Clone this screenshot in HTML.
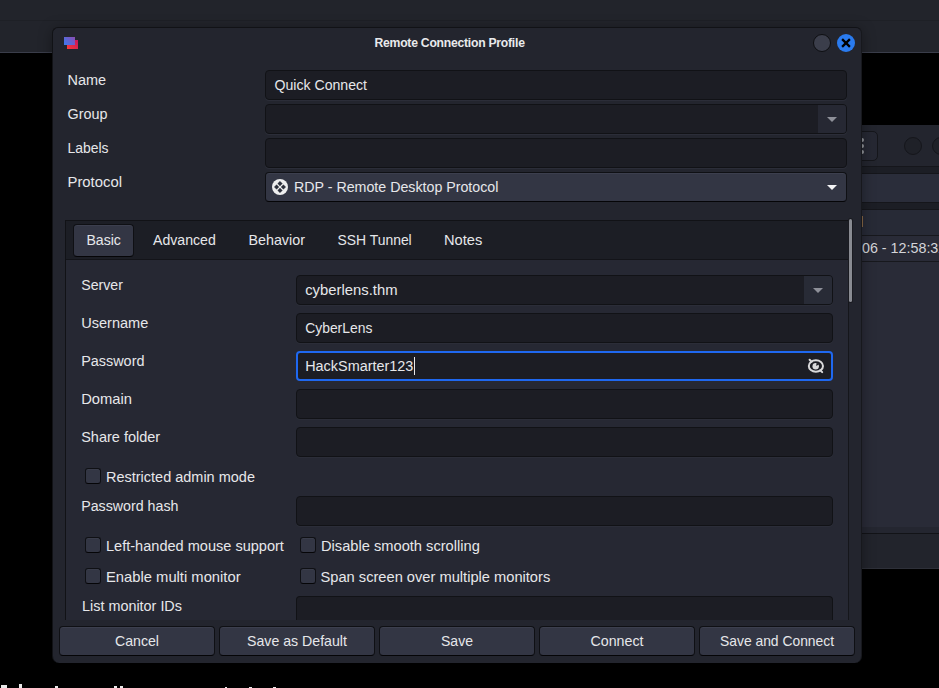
<!DOCTYPE html>
<html><head><meta charset="utf-8">
<style>
*{margin:0;padding:0;box-sizing:border-box}
html,body{width:939px;height:688px;overflow:hidden;background:#000;font-family:"Liberation Sans",sans-serif;font-size:14px;color:#e6e7ea}
.a{position:absolute}
.t{position:absolute;line-height:16px;white-space:nowrap}
.ent{position:absolute;background:#1c1d24;border:1px solid #111216;border-radius:4px;box-shadow:0 1px 0 #2b2d38}
.btn{position:absolute;background:#333644;border:1px solid #0f1014;border-bottom-color:#050507;border-radius:4px;box-shadow:inset 0 1px 0 #3c3f4e}
.cb{position:absolute;width:16px;height:16px;background:#333644;border:1px solid #0f1014;border-bottom-color:#050507;border-radius:3px;box-shadow:inset 0 1px 0 #3a3d4b}
.arr{position:absolute;width:0;height:0;border-left:5px solid transparent;border-right:5px solid transparent;border-top:5px solid #8e9099}
</style></head><body>
<div class="a" style="left:0;top:0;width:939px;height:52px;background:#22242b"></div>
<div class="a" style="left:0;top:20px;width:939px;height:1px;background:#1e2026"></div>
<div class="a" style="left:0;top:52px;width:939px;height:1px;background:#3a3d4a"></div>
<div class="a" style="left:862px;top:125px;width:77px;height:41px;background:#23252e;"></div>
<div class="a" style="left:848px;top:131px;width:30px;height:30px;background:#262833;border:1px solid #15161b;border-radius:5px"></div>
<div class="a" style="left:860px;top:138px;width:4px;height:4px;background:#94969c;border-radius:2px"></div>
<div class="a" style="left:860px;top:144px;width:4px;height:4px;background:#94969c;border-radius:2px"></div>
<div class="a" style="left:860px;top:150px;width:4px;height:4px;background:#94969c;border-radius:2px"></div>
<div class="a" style="left:904px;top:137px;width:18px;height:18px;background:#1f2128;border:1px solid #15161b;border-radius:50%"></div>
<div class="a" style="left:932px;top:137px;width:18px;height:18px;background:#1f2128;border:1px solid #15161b;border-radius:50%"></div>
<div class="a" style="left:862px;top:166px;width:77px;height:8px;background:#1c1e25;border-top:1px solid #15161b;border-bottom:1px solid #15161b"></div>
<div class="a" style="left:862px;top:174px;width:77px;height:28px;background:#2a2d3a;"></div>
<div class="a" style="left:862px;top:202px;width:77px;height:8px;background:#1c1e25;border-top:1px solid #15161b;border-bottom:1px solid #15161b"></div>
<div class="a" style="left:862px;top:210px;width:77px;height:25px;background:#272a36;"></div>
<div class="a" style="left:862px;top:216px;width:1px;height:11px;background:#8a6a48;"></div>
<div class="a" style="left:862px;top:235px;width:77px;height:1px;background:#17181d;"></div>
<div class="a" style="left:862px;top:236px;width:77px;height:291px;background:#292b37;"></div>
<div class="t" style="left:862px;top:240.05px;font-size:14.3px;color:#d4d5d9">06 - 12:58:32</div>
<div class="a" style="left:862px;top:261px;width:77px;height:1px;background:#17181d;"></div>
<div class="a" style="left:862px;top:527px;width:77px;height:6px;background:#242630;"></div>
<div class="a" style="left:862px;top:533px;width:77px;height:1px;background:#121317;"></div>
<div class="a" style="left:862px;top:534px;width:77px;height:34px;background:#22242c;"></div>
<div class="a" style="left:862px;top:568px;width:77px;height:1px;background:#2e3039;"></div>
<div class="a" style="left:1px;top:685px;width:6px;height:3px;background:#e8e8e8;"></div>
<div class="a" style="left:19px;top:684px;width:2.5px;height:4px;background:#e8e8e8;"></div>
<div class="a" style="left:55px;top:686px;width:2.5px;height:2px;background:#e8e8e8;"></div>
<div class="a" style="left:114px;top:686px;width:3px;height:2px;background:#e8e8e8;"></div>
<div class="a" style="left:120px;top:686px;width:3px;height:2px;background:#e8e8e8;"></div>
<div class="a" style="left:224.5px;top:687px;width:2.5px;height:1px;background:#e8e8e8;"></div>
<div class="a" style="left:249px;top:687px;width:2.5px;height:1px;background:#e8e8e8;"></div>
<div class="a" style="left:273px;top:687px;width:2.5px;height:1px;background:#e8e8e8;"></div>
<div class="a" style="left:52px;top:27px;width:810px;height:636px;background:#23252e;border:1px solid #111216;border-right-color:#17181d;border-bottom:none;border-radius:6px 6px 7px 7px;box-shadow:0 2px 14px rgba(0,0,0,0.35)"></div>
<div class="a" style="left:67px;top:40px;width:11px;height:9px;background:linear-gradient(45deg,#f83a3a,#c8145a);"></div>
<div class="a" style="left:64px;top:37px;width:11px;height:8px;background:linear-gradient(45deg,#3a7af2,#8c4cb0);"></div>
<div class="t" style="left:374.5px;top:34.77px;font-size:12.2px;color:#e9eaec;font-weight:bold;letter-spacing:-0.25px">Remote Connection Profile</div>
<div class="a" style="left:813px;top:34px;width:18px;height:18px;background:#3b3e4b;border:1px solid #0e0f12;border-radius:50%"></div>
<div class="a" style="left:837px;top:34px;width:18px;height:18px;background:#2a7bef;border-radius:50%"></div>
<svg class="a" style="left:837px;top:34px" width="18" height="18" viewBox="0 0 18 18"><path d="M5.1 5.1 L12.9 12.9 M12.9 5.1 L5.1 12.9" stroke="#000" stroke-width="2.3" stroke-linecap="butt"/></svg>
<div class="t" style="left:67.5px;top:71.99px;font-size:14.47px">Name</div>
<div class="t" style="left:67.5px;top:106.01px;font-size:14.39px">Group</div>
<div class="t" style="left:67.5px;top:140.17px;font-size:13.95px">Labels</div>
<div class="t" style="left:67.5px;top:173.85px;font-size:14.86px">Protocol</div>
<div class="ent" style="left:265px;top:70px;width:582px;height:30px"></div>
<div class="t" style="left:274.5px;top:77.11px;font-size:14.12px">Quick Connect</div>
<div class="ent" style="left:265px;top:104px;width:582px;height:30px"></div>
<div class="a" style="left:818px;top:105px;width:28px;height:28px;background:#262833;border-radius:0 3px 3px 0"></div>
<div class="arr" style="left:827px;top:117px"></div>
<div class="ent" style="left:265px;top:138px;width:582px;height:30px"></div>
<div class="btn" style="left:265px;top:172px;width:582px;height:30px"></div>
<svg class="a" style="left:272px;top:179px" width="16" height="16" viewBox="0 0 16 16"><circle cx="8" cy="8" r="8" fill="#eeeeee"/><path d="M8 2.3 L10.3 4.6 L8 6.9 L5.7 4.6Z M8 9.1 L10.3 11.4 L8 13.7 L5.7 11.4Z M4.6 5.7 L6.9 8 L4.6 10.3 L2.3 8Z M11.4 5.7 L13.7 8 L11.4 10.3 L9.1 8Z" fill="#2c2f3b" stroke="#2c2f3b" stroke-width="0.4" stroke-linejoin="round"/></svg>
<div class="t" style="left:294px;top:179.07px;font-size:14.23px">RDP - Remote Desktop Protocol</div>
<div class="arr" style="left:827px;top:185px;border-top-color:#f4f4f6"></div>
<div class="a" style="left:65px;top:220px;width:784px;height:400px;background:#262833;border-left:1px solid #111216;border-top:1px solid #111216;border-right:1px solid #15161b"></div>
<div class="a" style="left:66px;top:221px;width:782px;height:39px;background:#1c1e25;border-bottom:1px solid #131419"></div>
<div class="btn" style="left:73px;top:224px;width:61px;height:33px"></div>
<div class="t" style="left:86.4px;top:232.11px;font-size:14.11px">Basic</div>
<div class="t" style="left:153px;top:232.11px;font-size:14.12px">Advanced</div>
<div class="t" style="left:248.4px;top:232.03px;font-size:14.34px">Behavior</div>
<div class="t" style="left:337.5px;top:232.18px;font-size:13.92px">SSH Tunnel</div>
<div class="t" style="left:444px;top:231.92px;font-size:14.66px">Notes</div>
<div class="a" style="left:849px;top:219px;width:3px;height:83px;background:#898b92;border-radius:1.5px;box-shadow:0 0 0 1px #1a1b21"></div>
<div class="t" style="left:81.2px;top:277.09px;font-size:14.16px">Server</div>
<div class="ent" style="left:296px;top:275px;width:537px;height:30px"></div>
<div class="a" style="left:804px;top:276px;width:28px;height:28px;background:#282b36;border-radius:0 3px 3px 0"></div>
<div class="arr" style="left:813px;top:288px"></div>
<div class="t" style="left:305.2px;top:281.86px;font-size:14.83px">cyberlens.thm</div>
<div class="t" style="left:81.2px;top:314.96px;font-size:14.55px">Username</div>
<div class="ent" style="left:296px;top:313px;width:537px;height:30px"></div>
<div class="t" style="left:305.2px;top:320.18px;font-size:13.9px">CyberLens</div>
<div class="t" style="left:81.2px;top:353.00px;font-size:14.42px">Password</div>
<div class="ent" style="left:296px;top:351px;width:537px;height:30px;border:2px solid #1f68f0;box-shadow:none"></div>
<div class="t" style="left:305.2px;top:358.00px;font-size:14.43px">HackSmarter123</div>
<div class="a" style="left:414px;top:357px;width:1px;height:18px;background:#e8e8ea;"></div>
<svg class="a" style="left:804px;top:355px" width="24" height="22" viewBox="0 0 24 22"><ellipse cx="11.9" cy="11" rx="7.1" ry="5.7" fill="none" stroke="#d9d9db" stroke-width="2"/><circle cx="11.7" cy="11.3" r="3.2" fill="#d9d9db"/><path d="M12.2 11 L12.6 7.6 L15.2 9.2Z" fill="#1c1d24"/><path d="M5.6 4.8 L7.6 6.8 M16.3 15.2 L18.2 17.1" stroke="#d9d9db" stroke-width="2" stroke-linecap="round"/></svg>
<div class="t" style="left:81.2px;top:390.89px;font-size:14.74px">Domain</div>
<div class="ent" style="left:296px;top:389px;width:537px;height:30px"></div>
<div class="t" style="left:81.2px;top:428.98px;font-size:14.5px">Share folder</div>
<div class="ent" style="left:296px;top:427px;width:537px;height:30px"></div>
<div class="cb" style="left:85px;top:468px"></div>
<div class="t" style="left:106px;top:468.98px;font-size:14.49px">Restricted admin mode</div>
<div class="t" style="left:81.2px;top:498.07px;font-size:14.23px">Password hash</div>
<div class="ent" style="left:296px;top:496px;width:537px;height:30px"></div>
<div class="cb" style="left:85px;top:537px"></div>
<div class="t" style="left:106px;top:537.96px;font-size:14.55px">Left-handed mouse support</div>
<div class="cb" style="left:300px;top:537px"></div>
<div class="t" style="left:321px;top:537.92px;font-size:14.67px">Disable smooth scrolling</div>
<div class="cb" style="left:85px;top:568px"></div>
<div class="t" style="left:106px;top:568.88px;font-size:14.78px">Enable multi monitor</div>
<div class="cb" style="left:300px;top:568px"></div>
<div class="t" style="left:320.5px;top:568.92px;font-size:14.66px">Span screen over multiple monitors</div>
<div class="t" style="left:82px;top:598.01px;font-size:14.4px">List monitor IDs</div>
<div class="a" style="left:296px;top:596px;width:537px;height:24px;background:#1c1d24;border:1px solid #111216;border-bottom:none;border-radius:4px 4px 0 0"></div>
<div class="a" style="left:53px;top:620px;width:808px;height:6px;background:#23252e;"></div>
<div class="btn" style="left:59px;top:626px;width:156px;height:30px"></div>
<div class="t" style="left:115.0px;top:633.10px;font-size:14.14px">Cancel</div>
<div class="btn" style="left:219px;top:626px;width:156px;height:30px"></div>
<div class="t" style="left:247.0px;top:633.09px;font-size:14.17px">Save as Default</div>
<div class="btn" style="left:379px;top:626px;width:156px;height:30px"></div>
<div class="t" style="left:441.0px;top:633.14px;font-size:14.04px">Save</div>
<div class="btn" style="left:539px;top:626px;width:156px;height:30px"></div>
<div class="t" style="left:590.5px;top:633.07px;font-size:14.23px">Connect</div>
<div class="btn" style="left:699px;top:626px;width:156px;height:30px"></div>
<div class="t" style="left:720.0px;top:633.20px;font-size:13.86px">Save and Connect</div>
</body></html>
